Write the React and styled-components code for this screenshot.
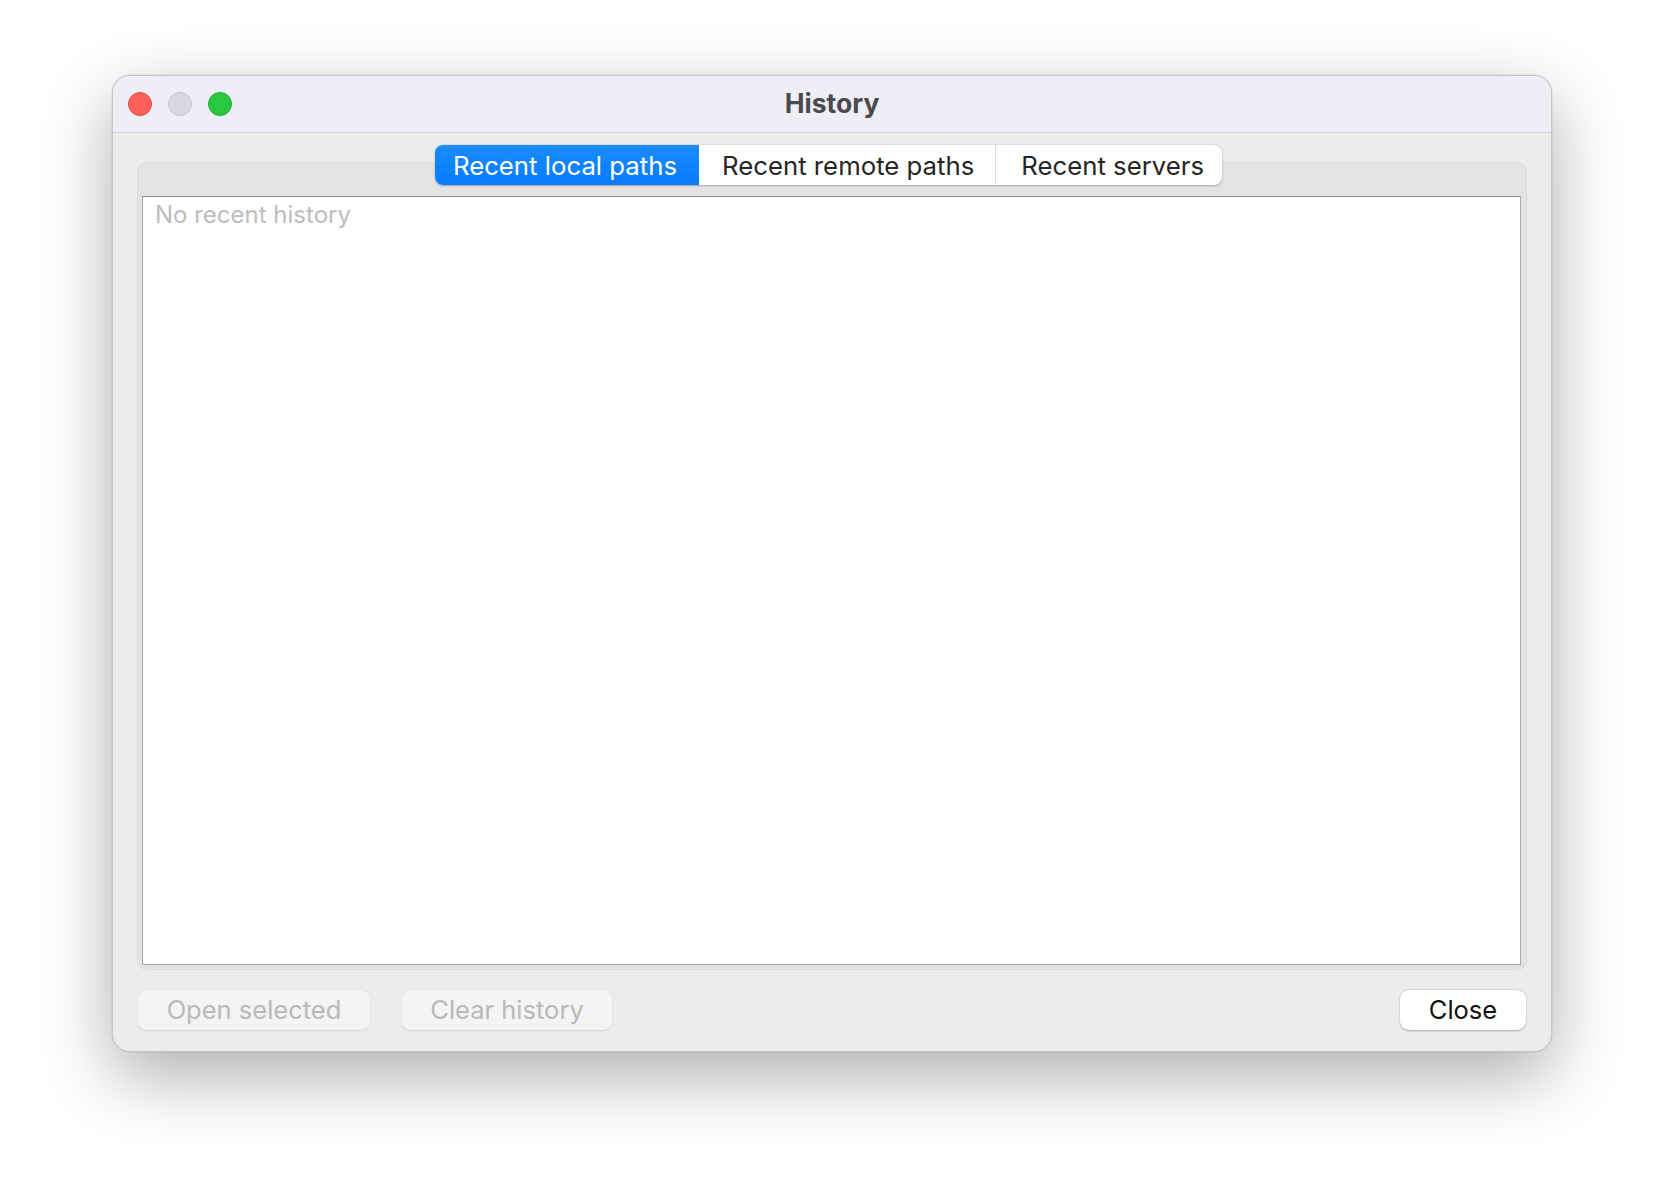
import React from "react";
import styled, { createGlobalStyle } from "styled-components";

const Global = createGlobalStyle`
  html, body { margin: 0; padding: 0; background: #ffffff; }
  body { font-family: Inter, "Noto Sans", "Liberation Sans", sans-serif; -webkit-font-smoothing: antialiased; }
`;

const Stage = styled.div`
  width: 1664px;
  height: 1200px;
  padding: 75px 0 0 112px;
  box-sizing: border-box;
`;

const Window = styled.div`
  width: 1440px;
  height: 977px;
  box-sizing: border-box;
  border-radius: 18px;
  border: 1px solid #c4c4c4;
  background: #ececec;
  box-shadow: 0 24px 70px rgba(0, 0, 0, 0.32), 0 0 0 0.5px rgba(0, 0, 0, 0.1);
  overflow: hidden;
  display: flex;
  flex-direction: column;
`;

const TitleBar = styled.div`
  height: 56px;
  flex: none;
  background: #efeef7;
  border-bottom: 1px solid #d3d3d6;
  display: flex;
  align-items: center;
  position: relative;
  padding-left: 15px;
`;

const Lights = styled.div`
  display: flex;
  gap: 16px;
  margin-top: -1px;
`;

const Light = styled.span`
  width: 24px;
  height: 24px;
  border-radius: 50%;
  box-sizing: border-box;
  background: ${(p) => p.$c};
  border: 1px solid ${(p) => p.$b};
`;

const Title = styled.div`
  position: absolute;
  left: 0;
  right: 0;
  top: 0;
  bottom: 0;
  display: flex;
  align-items: center;
  justify-content: center;
  font-size: 26.5px;
  font-weight: 700;
  color: #4a4a4c;
  pointer-events: none;
  padding-bottom: 2px;
`;

const Body = styled.div`
  flex: 1;
  display: flex;
  flex-direction: column;
  padding: 29px 24px 21px 24px;
`;

const Pane = styled.div`
  flex: 1;
  background: #e3e3e3;
  border: 1px solid #dadada;
  border-radius: 10px;
  display: flex;
  flex-direction: column;
  padding: 0 5px 4px 4px;
`;

const Tabs = styled.div`
  align-self: center;
  display: flex;
  margin-top: -18px;
  margin-right: 6px;
  height: 40px;
  background: #ffffff;
  border-radius: 8px;
  box-shadow: 0 0.5px 2px rgba(0, 0, 0, 0.28);
`;

const Tab = styled.div`
  display: flex;
  align-items: center;
  padding: 1px ${(p) => p.$pr}px 0 ${(p) => p.$pl}px;
  font-size: 25.75px;
  color: ${(p) => (p.$active ? "#ffffff" : "#262626")};
  background: ${(p) => (p.$active ? "linear-gradient(#1b8dff, #067bff)" : "transparent")};
  border-radius: ${(p) => (p.$active ? "8px 0 0 8px" : "0")};
  border-left: ${(p) => (p.$sep ? "1px solid #dddddd" : "none")};
  &:last-child { border-radius: 0 8px 8px 0; }
`;

const List = styled.div`
  flex: 1;
  margin-top: 11px;
  background: #ffffff;
  border: 1px solid #a9a9a9;
  border-top-color: #8f8f8f;
  padding: 3px 12px;
`;

const Placeholder = styled.div`
  font-size: 24px;
  color: #bdbdbd;
  line-height: 30px;
`;

const Footer = styled.div`
  display: flex;
  align-items: center;
  margin-top: 20px;
  padding-left: 1px;
  padding-right: 1px;
`;

const Button = styled.div`
  height: 40px;
  box-sizing: border-box;
  width: ${(p) => p.$w}px;
  margin-right: ${(p) => p.$mr || 0}px;
  margin-left: ${(p) => (p.$push ? "auto" : "0")};
  border-radius: 9px;
  display: flex;
  align-items: center;
  justify-content: center;
  font-size: 25.5px;
  padding-bottom: 1px;
  background: ${(p) => (p.$disabled ? "#f4f4f4" : "#ffffff")};
  color: ${(p) => (p.$disabled ? "#b9b9b9" : "#111111")};
  box-shadow: ${(p) =>
    p.$disabled
      ? "0 0.5px 1.5px rgba(0,0,0,0.1)"
      : "0 0.5px 2px rgba(0,0,0,0.3)"};
`;

export default function App() {
  return (
    <>
      <Global />
      <Stage>
        <Window>
          <TitleBar>
            <Lights>
              <Light $c="#ff5f57" $b="#e2463f" />
              <Light $c="#d8d7df" $b="#c4c3cb" />
              <Light $c="#28c840" $b="#1fab33" />
            </Lights>
            <Title>History</Title>
          </TitleBar>
          <Body>
            <Pane>
              <Tabs>
                <Tab $active $pl={18} $pr={22}>Recent local paths</Tab>
                <Tab $pl={23} $pr={21}>Recent remote paths</Tab>
                <Tab $sep $pl={25} $pr={18}>Recent servers</Tab>
              </Tabs>
              <List>
                <Placeholder>No recent history</Placeholder>
              </List>
            </Pane>
            <Footer>
              <Button $disabled $w={232} $mr={32}>Open selected</Button>
              <Button $disabled $w={210}>Clear history</Button>
              <Button $push $w={126}>Close</Button>
            </Footer>
          </Body>
        </Window>
      </Stage>
    </>
  );
}
